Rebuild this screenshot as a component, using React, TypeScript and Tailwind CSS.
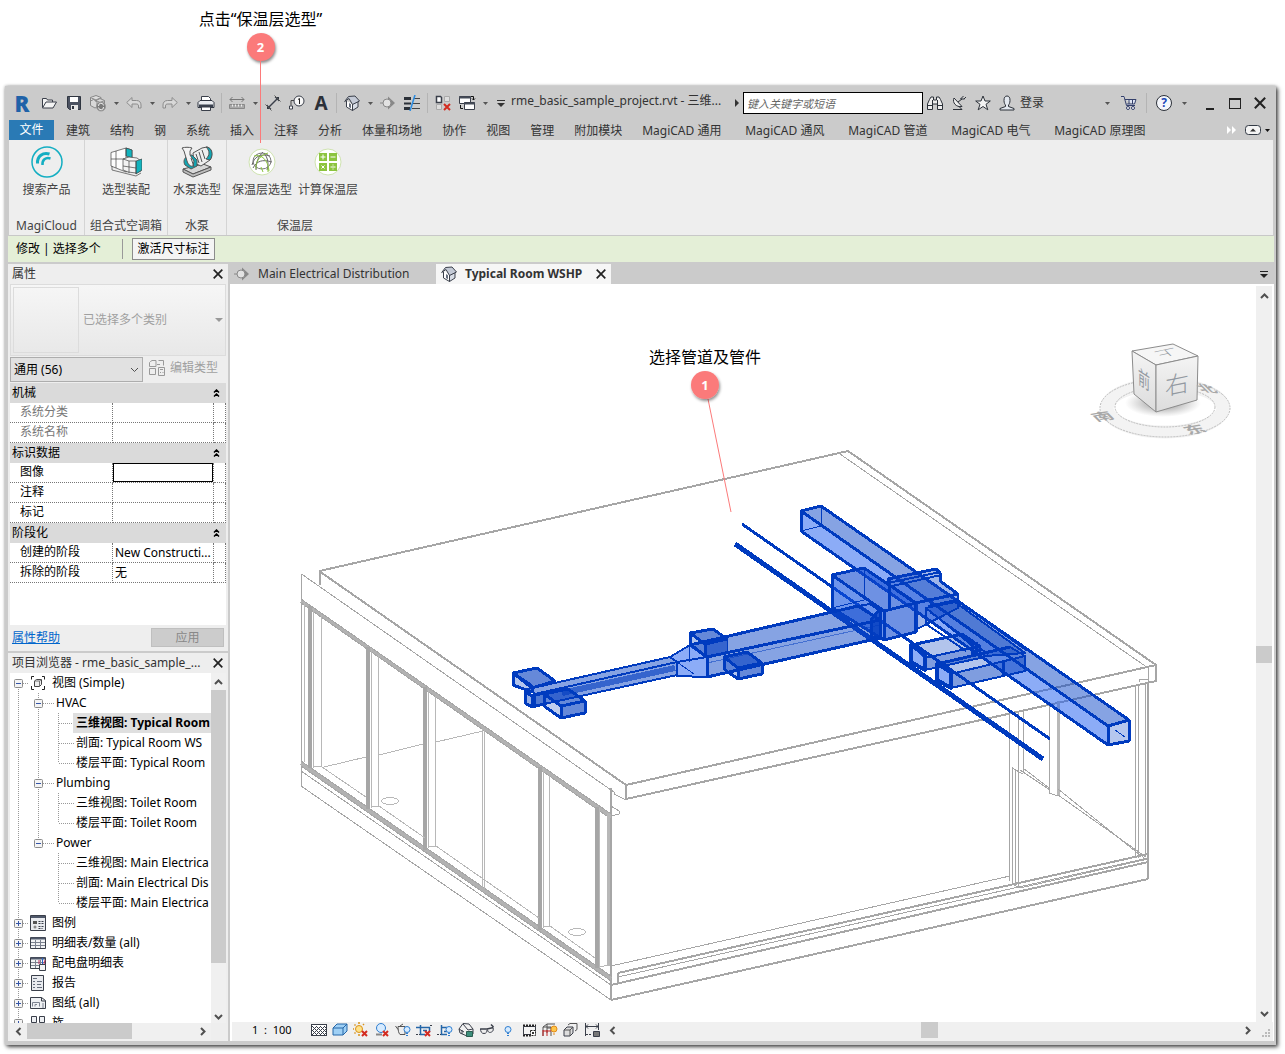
import type { ReactNode } from 'react';

const ribbonTabs = ['建筑', '结构', '钢', '系统', '插入', '注释', '分析', '体量和场地', '协作', '视图', '管理', '附加模块'];
const magicadTabs = ['MagiCAD 通用', 'MagiCAD 通风', 'MagiCAD 管道', 'MagiCAD 电气', 'MagiCAD 原理图'];

const propertyGroups = [
  { title: '机械', muted: true, rows: [['系统分类', ''], ['系统名称', '']] },
  { title: '标识数据', muted: false, rows: [['图像', ''], ['注释', ''], ['标记', '']] },
  { title: '阶段化', muted: false, rows: [['创建的阶段', 'New Constructi...'], ['拆除的阶段', '无']] },
];

type TreeRow = { level: number; label: string; icon?: ReactNode; open?: boolean; last?: boolean; trunk?: boolean; active?: boolean };

function Svg({ w = 16, h = 16, children }: { w?: number; h?: number; children: ReactNode }) {
  return (
    <svg width={w} height={h} viewBox={`0 0 ${w} ${h}`} fill="none" stroke="#3a3f4a" strokeWidth="1" className="shrink-0" aria-hidden="true">
      {children}
    </svg>
  );
}

/* ---------- quick access icons ---------- */

const OpenIcon = () => (
  <Svg>
    <path d="M1.500 12.500v-9h4l1 1.500h5v2" fill="#f4f4f4" />
    <path d="M1.500 13 5 7h10.500L12 13Z" fill="#f4f4f4" />
  </Svg>
);
const SaveIcon = () => (
  <Svg>
    <path d="M1.500 1.500h13v13h-11l-2-2Z" fill="#4b5261" stroke="#2f3540" />
    <path d="M4 2h8v5H4z" fill="#fff" stroke="none" />
    <path d="M5 10h7v5H5z" fill="#e6e6e6" stroke="none" />
    <path d="M6 11h2v3H6z" fill="#2f3540" stroke="none" />
  </Svg>
);
const SyncIcon = () => (
  <Svg w={18} h={18}>
    <g stroke="#888" fill="#ddd">
      <path d="m7 1.500 5 2v5L7 11 1.500 8.500v-5Z" />
      <path d="m7 6.500 4-2 4.500 2v5.500L11 15l-4-2.500Z" fill="#d2d2d2" />
      <path d="m1.500 7 3-1.500L8 7.500V13l-2 1-4.500-2.500Z" fill="#d8d8d8" />
      <path d="M1.500 3.500 7 6l5-2.500M7 6v2M7 6.500l4 2 4.500-2" />
    </g>
    <circle cx="12" cy="12.500" r="4.500" fill="#7a7a7a" stroke="#999" />
    <path d="M9.500 12a2.500 2.500 0 0 1 5-.5M14.500 13a2.500 2.500 0 0 1-5 .5" stroke="#eee" />
  </Svg>
);
const UndoIcon = ({ flip = false }: { flip?: boolean }) => (
  <Svg>
    <path
      transform={flip ? 'translate(16 0) scale(-1 1)' : undefined}
      d="M.7 7.500 6 2.500v3h4.500c3 0 4.500 2 4.500 4.500v3h-2.500v-2c0-1.500-.8-2-2.300-2H6v3.500Z"
      fill="#d8d8d8"
      stroke="#8c8c8c"
    />
  </Svg>
);
const PrintIcon = () => (
  <Svg w={18} h={16}>
    <path d="M4.500 6V1.500h7l2 2V6" fill="#fff" />
    <path d="M3 5.500h12l2 2v5H1v-5Z" fill="#e9ebef" stroke="#2f3540" />
    <path d="M2 9.500h14v3H2z" fill="#39404d" stroke="none" />
    <path d="M4.500 12h9v3.500h-9z" fill="#fff" />
  </Svg>
);
const MeasureIcon = () => (
  <Svg>
    <path d="M1 4.500h14M3.500 2 1 4.500 3.500 7M12.500 2 15 4.500 12.500 7" stroke="#777" />
    <path d="M.5 9.500h15v4H.5z" fill="#a9a9a9" stroke="#888" />
    <path d="M3.500 9.500v2M6.500 9.500v2M9.500 9.500v2M12.500 9.500v2" stroke="#eee" />
  </Svg>
);
const DimensionIcon = () => (
  <Svg>
    <path d="m4 12 8-8" strokeWidth="1.500" />
    <path d="M2 14V9.500L6.500 14ZM14 2H9.500L14 6.500Z" fill="#333a45" stroke="none" />
    <path d="m.5 9.500 6 6M9.500.5l6 6" stroke="#555" />
  </Svg>
);
const TagIcon = () => (
  <Svg w={18} h={16}>
    <path d="M3 10.500V5.500h3.500" stroke="#444" />
    <path d="M1.500 11h3v3h-3z" fill="#fff" />
    <circle cx="11" cy="6" r="5" fill="#f8f8f8" />
    <path d="M10 4.500 11.500 3.500V9" stroke="#222" />
  </Svg>
);
const HouseIcon = () => (
  <Svg>
    <path d="M2.500 6v6l6 3.500V9" fill="#fff" />
    <path d="M8.500 15.500 14 12V6.500L8.500 9Z" fill="#d8dde6" />
    <path d="M.7 6.500 4.500 1.500 11 1l4.500 5-7 3.500L5 3.500Z" fill="#c4cad6" />
    <path d="m5 8 2 1.200v4L5 12Z" fill="#666e7d" stroke="none" />
  </Svg>
);
const SectionIcon = () => (
  <Svg>
    <path d="M8 1.500 15 8l-7 6.500Z" fill="#888" stroke="none" />
    <circle cx="7" cy="8" r="4" fill="#e2e2e2" stroke="#888" />
    <path d="M0 8h3" stroke="#888" />
  </Svg>
);
const ThinLinesIcon = () => (
  <Svg>
    <path d="M0 3.500h7M0 13.500h6" stroke="#2b3038" strokeWidth="3" />
    <path d="M0 8.500h7" stroke="#2b3038" strokeWidth="2" />
    <path d="M10 3.500h6M9 8.500h7M8 13.500h8" stroke="#444" />
    <path d="M11 0 6 16" stroke="#2a8be0" strokeWidth="1.500" />
  </Svg>
);
const CloseHiddenIcon = () => (
  <Svg>
    <path d="M1.500 1.500h4l1 1v5h-5Z" fill="#fff" strokeWidth="1.500" />
    <path d="M9.500 1.500h5v5h-5zM1.500 9.500h5v5h-5z" fill="#ddd" stroke="#aaa" />
    <path d="m9 9 6 6M15 9l-6 6" stroke="#d32b20" strokeWidth="2" />
  </Svg>
);
const SwitchIcon = () => (
  <Svg w={18} h={16}>
    <path d="M1.500 1.500h11v7h-11z" fill="#fff" />
    <path d="M1 2.500h12" stroke="#444b57" strokeWidth="2" />
    <path d="M6.500 7.500h10v7h-10z" fill="#fff" />
    <path d="M6 8.500h11" stroke="#444b57" strokeWidth="2" />
    <path d="M13 1.500h2.500V5M14 3.500l1.500 1.500L17 3.500M2.500 10v3.500H5" stroke="#111" />
  </Svg>
);
const BinocularsIcon = () => (
  <Svg>
    <path d="M2.500 4.500 4 2h2.500v3h3V2H12l1.500 2.500L15.500 9v5.500h-5V9h-5v5.500h-5V9Z" fill="#eee" stroke="#2b3038" />
    <path d="M5.500 5v4M10.500 5v4M.5 10.500h5M10.500 10.500h5" stroke="#2b3038" />
  </Svg>
);
const DishIcon = () => (
  <Svg>
    <path d="M3 3c-2 4.500 2 9.500 8 8.500Z" fill="#eee" stroke="#2b3038" />
    <path d="m7 7 4-3M12.500 1 9.500 4h4M2 14.500h9L7.500 11M13 4l2-2" stroke="#2b3038" />
  </Svg>
);
const StarIcon = () => (
  <Svg>
    <path d="m8 1 2 5h5.300L11 9.300l1.800 5.500L8 11.500l-4.800 3.300L5 9.300.7 6H6Z" fill="#f2f2f2" stroke="#2b3038" />
  </Svg>
);
const UserIcon = () => (
  <Svg>
    <path d="M5 5.500C5 2.500 6 1 8 1s3 1.500 3 4.500C11 8 10 9.500 9.500 10v1.500l5.500 2v1.500H1v-1.500l5.500-2V10C6 9.500 5 8 5 5.500Z" fill="#e3e8ef" stroke="#2b3038" />
  </Svg>
);
const CartIcon = () => (
  <Svg>
    <path d="M0 1.500h3l2.500 9h8.500M4 4.500h11L13.500 9h-8" fill="#dfe5f4" stroke="#34406b" />
    <path d="M8 5v4M11.500 5v4" stroke="#34406b" />
    <circle cx="7" cy="13" r="1.500" fill="#fff" stroke="#34406b" />
    <circle cx="12" cy="13" r="1.500" fill="#fff" stroke="#34406b" />
  </Svg>
);

/* ---------- ribbon icons ---------- */

const CloudIcon = () => (
  <Svg w={32} h={32}>
    <circle cx="16" cy="16" r="15" stroke="#14aec2" strokeWidth="1.500" />
    <path d="M6.500 17.500C6 10 12 6 18.500 8" stroke="#14aec2" strokeWidth="3" />
    <path d="M11.500 19c-.5-5 3-8 8-6.500" stroke="#14aec2" strokeWidth="2.500" />
  </Svg>
);
const AhuIcon = () => (
  <Svg w={32} h={32}>
    <g strokeWidth=".7" stroke="#444">
      <path d="M1 6.500 16 2l6 2v19l-6 3L1 20Z" fill="#fcfcfc" />
      <path d="m16 2 6 2v8l-6-2Z" fill="#12b3bd" />
      <path d="M1 13h15l6 1M6 5v17M16 2v24" />
      <path d="m13 13 6-2 8 1 4 3v10l-5 2-8-1-5-2Z" fill="#f2f2f2" />
      <path d="m26 15 6-2v11l-6 4Z" fill="#12b3bd" />
      <path d="M13 13l6 2v12M19 15h7v13M13 20l13 2" />
      <path d="M2 20v4l24 6 5-3" fill="none" />
    </g>
  </Svg>
);
const PumpIcon = () => (
  <Svg w={32} h={32}>
    <g strokeWidth="1" stroke="#555">
      <path d="m2 23 20-5 8 3-18 7Z" fill="#d7d7d7" />
      <path d="m2 23 10 5 18-7v3l-18 7-10-5Z" fill="#bdbdbd" />
      <path d="m12 7 9-5 5-1c5 1 6 8 3 13l-9 6-7-3Z" fill="#eee" />
      <path d="M25 1c6 0 8 8 4 13l-4-1c4-4 4-8 0-12Z" fill="#12a6b3" />
      <path d="M4 19C1 14 5 9 11 9l5 5v6l-6 3Z" fill="#12a6b3" />
      <path d="M1 2c3-1 7-1 10 0L9 5v4l4 6-1 5c-3 1-5-2-6-5L3 5Z" fill="#f3f3f3" />
      <path d="m15 8 3 9M18 6l3 10M21 4l3 9M10 12l3 9" />
    </g>
  </Svg>
);
const InsulationIcon = () => (
  <Svg w={28} h={28}>
    <circle cx="14" cy="14" r="13" fill="#fff" stroke="#cfe3b0" />
    <path d="M4 17C6 9 12 5 22 8M5 20c4-7 9-9 19-6M8 22C8 13 11 8 15 4M19 22c2-6 1-12-3-17" stroke="#666" />
    <ellipse cx="14" cy="13" rx="9" ry="8" stroke="#777" />
    <path d="M6 8c8-2 14 4 15 15M8 21c-1-8 5-14 12-16M13 19l2 5M20 20v4" stroke="#8cc43f" />
  </Svg>
);
const CalculatorIcon = () => (
  <Svg w={28} h={28}>
    <circle cx="14" cy="14" r="13" fill="#fff" stroke="#cfe3b0" />
    <path d="M5 5h8v8H5zM15 5h8v8h-8zM5 15h8v8H5zM15 15h8v8h-8z" fill="#8cc43f" stroke="none" />
    <path d="M6.500 9h5M9 6.500v5M16.500 9h5M7.500 17.500l3 3M10.500 17.500l-3 3M16.500 19h5M19 16.500v1M19 20.500v1" stroke="#fff" />
  </Svg>
);

/* ---------- browser icons ---------- */

const ViewsIcon = () => (
  <Svg>
    <path d="M4 1.500H1.500v3M12 1.500h2.500v3M1.500 11v3.500H4M14.500 11v3.500H12" stroke="#222" />
    <path d="M4.500 6 6.500 4.500h5v5l-2 2h-5Z" fill="#eee" stroke="#444" />
    <path d="M4.500 6h5v5.500M9.500 6l2-1.500" stroke="#777" />
  </Svg>
);
const LegendIcon = () => (
  <Svg>
    <path d="M.5.5h15v15H.5z" fill="#e9ebef" />
    <path d="M1 2h14" stroke="#4f586a" strokeWidth="2" />
    <path d="M3 6h4v3H3z" fill="#555" stroke="none" />
    <circle cx="5" cy="12" r="1.500" fill="#888" stroke="none" />
    <path d="M8.500 6.500h5M8.500 8.500h5M8.500 11.500h5M8.500 13.500h4" strokeDasharray="2 1" />
  </Svg>
);
const ScheduleIcon = ({ panel = false }: { panel?: boolean }) => (
  <Svg>
    <path d="M.5 2.500h15v11H.5z" fill="#f2f3f5" />
    <path d="M1 3.500h14" stroke="#4f586a" strokeWidth="2" />
    <path d="M1 7.500h14M1 10.500h14M5.500 5v8M10.500 5v8" stroke="#7c8290" />
    {panel && <path d="M9.500 9.500h6v6h-6z" fill="#f4f4f4" />}
    {panel && <path d="M9 5v4M15 5l-1 4" stroke="#c03060" />}
    {panel && <path d="M12.500 3v6" stroke="#2b62c9" />}
  </Svg>
);
const ReportIcon = () => (
  <Svg>
    <path d="M1.500.5h12v15h-12z" fill="#e9ebef" />
    <path d="M3 3.500h4M3 6.500h2M3 9.500h2M3 12.500h2M7 6.500h5M7 9.500h4M7 12.500h5" stroke="#666e7d" />
  </Svg>
);
const SheetIcon = () => (
  <Svg>
    <path d="M.5 2.500h11l4 3v8H.5z" fill="#eef0f3" />
    <path d="M11.500 2.500v3.500h4" />
    <path d="M2.500 11.500v-4h7v4M5 11.500v-2h2M13 8v5" stroke="#7c8290" />
  </Svg>
);
const FamilyIcon = () => (
  <Svg>
    <path d="M1.500 1.500h5v6h-5zM9.500 1.500h5v6h-5zM1.500 10.500h5v5h-5z" fill="#eef0f3" />
  </Svg>
);

const treeRows: TreeRow[] = [
  { level: 0, label: '视图 (Simple)', icon: <ViewsIcon />, open: true },
  { level: 1, label: 'HVAC', open: true },
  { level: 2, label: '三维视图: Typical Room', trunk: true, active: true },
  { level: 2, label: '剖面: Typical Room WS', trunk: true },
  { level: 2, label: '楼层平面: Typical Room', trunk: true, last: true },
  { level: 1, label: 'Plumbing', open: true },
  { level: 2, label: '三维视图: Toilet Room', trunk: true },
  { level: 2, label: '楼层平面: Toilet Room', trunk: true, last: true },
  { level: 1, label: 'Power', open: true, last: true },
  { level: 2, label: '三维视图: Main Electrica' },
  { level: 2, label: '剖面: Main Electrical Dis' },
  { level: 2, label: '楼层平面: Main Electrica', last: true },
  { level: 0, label: '图例', icon: <LegendIcon /> },
  { level: 0, label: '明细表/数量 (all)', icon: <ScheduleIcon /> },
  { level: 0, label: '配电盘明细表', icon: <ScheduleIcon panel /> },
  { level: 0, label: '报告', icon: <ReportIcon /> },
  { level: 0, label: '图纸 (all)', icon: <SheetIcon /> },
  { level: 0, label: '族', icon: <FamilyIcon /> },
];

/* ---------- small shared pieces ---------- */

function Caret({ color = '#555' }: { color?: string }) {
  return (
    <svg width="5" height="3" viewBox="0 0 5 3" aria-hidden="true">
      <path d="M0 0h5L2.500 3Z" fill={color} />
    </svg>
  );
}

function Chevron({ dir, thin = false }: { dir: 'up' | 'down' | 'left' | 'right'; thin?: boolean }) {
  const d = { up: 'M1 7 4.500 3.500 8 7', down: 'M1 3l3.500 3.500L8 3', left: 'M6.500 1 3 4.500 6.500 8', right: 'M3 1l3.500 3.500L3 8' }[dir];
  return (
    <svg width="9" height="9" viewBox="0 0 9 9" fill="none" stroke="#505050" strokeWidth={thin ? 1 : 2} aria-hidden="true">
      <path d={d} />
    </svg>
  );
}

function CrossIcon({ size = 10 }: { size?: number }) {
  return (
    <svg width={size} height={size} viewBox="0 0 10 10" stroke="#222" strokeWidth="1.700" aria-hidden="true">
      <path d="m.7.7 8.600 8.600M9.300.7.7 9.300" />
    </svg>
  );
}

function Tool({ label, children }: { label: string; children: ReactNode }) {
  return (
    <button type="button" aria-label={label} className="flex h-6 w-6 shrink-0 items-center justify-center">
      {children}
    </button>
  );
}

function DropButton({ label }: { label: string }) {
  return (
    <button type="button" aria-label={label} className="flex h-6 w-3 shrink-0 items-center justify-center">
      <Caret />
    </button>
  );
}

const Divider = () => <span className="mx-[3px] h-5 w-px shrink-0 bg-[#b4b4b4]" />;

function TitleBar() {
  return (
    <header className="flex h-[34px] items-center pr-0.5">
      <button type="button" aria-label="Revit" className="w-7 shrink-0 text-center text-[22px] leading-6 font-black text-[#1f62a8]">R</button>
      <button type="button" aria-label="打开" className="flex h-6 w-[26px] shrink-0 items-center justify-center"><OpenIcon /></button>
      <Tool label="保存"><SaveIcon /></Tool>
      <Tool label="同步"><SyncIcon /></Tool>
      <DropButton label="同步选项" />
      <Tool label="放弃"><UndoIcon /></Tool>
      <DropButton label="放弃列表" />
      <Tool label="重做"><UndoIcon flip /></Tool>
      <DropButton label="重做列表" />
      <Tool label="打印"><PrintIcon /></Tool>
      <Divider />
      <Tool label="测量"><MeasureIcon /></Tool>
      <DropButton label="测量选项" />
      <Tool label="对齐尺寸标注"><DimensionIcon /></Tool>
      <Tool label="按类别标记"><TagIcon /></Tool>
      <Tool label="文字"><span className="text-[19px] leading-6 font-bold text-[#2b3038]">A</span></Tool>
      <Divider />
      <Tool label="默认三维视图"><HouseIcon /></Tool>
      <DropButton label="三维视图选项" />
      <Tool label="剖面"><SectionIcon /></Tool>
      <Tool label="细线"><ThinLinesIcon /></Tool>
      <Divider />
      <Tool label="关闭隐藏窗口"><CloseHiddenIcon /></Tool>
      <Tool label="切换窗口"><SwitchIcon /></Tool>
      <DropButton label="窗口列表" />
      <button type="button" aria-label="自定义快速访问工具栏" className="flex h-6 w-5 shrink-0 flex-col items-center justify-center gap-[2px]">
        <span className="h-px w-2 bg-[#333]" />
        <svg width="8" height="4" viewBox="0 0 8 4" aria-hidden="true"><path d="M0 0h8L4 4Z" fill="#333" /></svg>
      </button>
      <h1 className="w-56 shrink-0 pb-1 text-[12px] leading-4 whitespace-nowrap text-[#333]">rme_basic_sample_project.rvt - 三维...</h1>
      <svg width="4" height="8" viewBox="0 0 4 8" className="mr-1 shrink-0" aria-hidden="true"><path d="M0 0v8l4-4Z" fill="#333" /></svg>
      <input
        type="text"
        aria-label="搜索"
        placeholder="键入关键字或短语"
        className="h-[22px] w-[180px] min-w-0 border border-black bg-white px-[3px] text-[11px] italic placeholder:text-[#666]"
      />
      <Tool label="查找"><BinocularsIcon /></Tool>
      <Tool label="通讯中心"><DishIcon /></Tool>
      <Tool label="收藏夹"><StarIcon /></Tool>
      <button type="button" className="flex shrink-0 items-center gap-[5px] pl-1 text-[12px] leading-4 text-[#333]">
        <UserIcon />
        登录
      </button>
      <span className="flex-1" />
      <DropButton label="登录选项" />
      <span className="w-1" />
      <Tool label="应用商店"><CartIcon /></Tool>
      <span className="w-0.5" />
      <Divider />
      <button type="button" aria-label="帮助" className="flex h-6 w-7 shrink-0 items-center justify-center">
        <span className="flex h-4 w-4 items-center justify-center rounded-full border border-[#2b3038] bg-[#f4f6fb] text-[12px] leading-4 font-bold text-[#1c48b8]">?</span>
      </button>
      <DropButton label="帮助选项" />
      <button type="button" aria-label="最小化" className="ml-2 flex h-6 w-6 items-center justify-center">
        <span className="mt-3 h-[2px] w-2 bg-[#222]" />
      </button>
      <button type="button" aria-label="最大化" className="flex h-6 w-[26px] items-center justify-center">
        <span className="h-[11px] w-3 border border-t-2 border-[#222]" />
      </button>
      <Tool label="关闭"><CrossIcon size={12} /></Tool>
    </header>
  );
}

function RibbonTabs() {
  return (
    <nav className="flex h-5 items-center overflow-hidden pl-px text-[12px] leading-[22px] whitespace-nowrap text-[#333]">
      <button type="button" className="mr-0.5 w-[45px] shrink-0 bg-[#2a7ab5] text-white">文件</button>
      {ribbonTabs.map((tab) => (
        <button key={tab} type="button" className="shrink-0 px-[10px] pt-px">{tab}</button>
      ))}
      {magicadTabs.map((tab) => (
        <button key={tab} type="button" className="min-w-[103px] shrink-0 pt-px pl-[10px] text-left">{tab}</button>
      ))}
      <span className="flex-1" />
      <button type="button" aria-label="更多选项卡" className="mr-2">
        <svg width="10" height="8" viewBox="0 0 10 8" aria-hidden="true"><path d="M0 0v8l4-4ZM5 0v8l4-4Z" fill="#fff" /></svg>
      </button>
      <button type="button" aria-label="最小化功能区" className="flex items-center gap-1 pr-1">
        <svg width="16" height="10" viewBox="0 0 16 10" aria-hidden="true">
          <rect x=".5" y=".5" width="15" height="9" rx="3" fill="#f4f4f4" stroke="#333a45" />
          <path d="M5 6.500h6L8 3.500Z" fill="#333" />
        </svg>
        <Caret color="#111" />
      </button>
    </nav>
  );
}

function RibbonPanel({ title, className, children }: { title: string; className: string; children: ReactNode }) {
  return (
    <section className={`flex shrink-0 flex-col justify-between pt-1.5 pb-px ${className}`}>
      <div className="flex justify-center">{children}</div>
      <h2 className="text-center">{title}</h2>
    </section>
  );
}

function RibbonButton({ label, icon }: { label: string; icon: ReactNode }) {
  return (
    <button type="button" className="flex w-[66px] flex-col items-center gap-1 whitespace-nowrap">
      <span className="flex h-8 items-center">{icon}</span>
      {label}
    </button>
  );
}

function Ribbon() {
  return (
    <div className="mr-px ml-px flex h-24 border-b border-[#c8c8c8] bg-[#eee] text-[12px] leading-4 text-[#444]">
      <RibbonPanel title="MagiCloud" className="w-[76px] border-r border-[#d4d4d4]">
        <RibbonButton label="搜索产品" icon={<CloudIcon />} />
      </RibbonPanel>
      <RibbonPanel title="组合式空调箱" className="w-[83px] border-r border-[#d4d4d4]">
        <RibbonButton label="选型装配" icon={<AhuIcon />} />
      </RibbonPanel>
      <RibbonPanel title="水泵" className="w-[59px] border-r border-[#d4d4d4]">
        <RibbonButton label="水泵选型" icon={<PumpIcon />} />
      </RibbonPanel>
      <RibbonPanel title="保温层" className="w-[136px]">
        <RibbonButton label="保温层选型" icon={<InsulationIcon />} />
        <RibbonButton label="计算保温层" icon={<CalculatorIcon />} />
      </RibbonPanel>
    </div>
  );
}

function Properties() {
  return (
    <section className="shrink-0 bg-[#eee] px-0.5 pb-1">
      <div className="flex h-5 items-center justify-between pr-[3px] pl-0.5">
        <h2 className="text-[#333]">属性</h2>
        <button type="button" aria-label="关闭属性"><CrossIcon /></button>
      </div>
      <button type="button" className="flex h-[72px] w-full items-center border border-[#dcdcdc] bg-linear-to-b from-[#f6f6f6] to-[#e8e8e8] p-0.5 text-[#a0a0a0]">
        <span className="mr-1 h-[66px] w-[66px] border border-[#dcdcdc]" />
        <span className="flex-1 text-left">已选择多个类别</span>
        <svg width="8" height="4" viewBox="0 0 8 4" aria-hidden="true"><path d="M0 0h8L4 4Z" fill="#999" /></svg>
      </button>
      <div className="flex items-center py-px">
        <div className="relative">
          <select aria-label="类别" className="h-[25px] w-[133px] appearance-none border border-[#adadad] bg-[#e1e1e1] px-[3px] text-black">
            <option>通用 (56)</option>
          </select>
          <span className="pointer-events-none absolute top-2 right-1"><Chevron dir="down" thin /></span>
        </div>
        <button type="button" className="ml-1.5 flex items-center gap-[5px] pb-1 text-[#a0a0a0]">
          <Svg>
            <g stroke="#999">
              <path d="M1.500 1.500 3 .5h4v6H.5v-4ZM9.500.5h5v5M.5 8.500h6v6h-6zM8 4.500h3" />
              <path d="M9.500 7.500h6v8h-6zM11 9.500h3M11 12.500h1M13.500 12.500h1" />
            </g>
          </Svg>
          编辑类型
        </button>
      </div>
      <div className="h-[242px] bg-white">
        <table className="w-full table-fixed border-separate border-spacing-0 text-black">
          <colgroup>
            <col className="w-[103px]" />
            <col />
            <col className="w-3" />
          </colgroup>
          {propertyGroups.map((group) => (
            <tbody key={group.title}>
              <tr className="h-5 bg-[#dadada]">
                <th colSpan={3} scope="colgroup" className="h-5 py-0 pl-0.5 text-left font-normal">
                  <div className="flex items-center justify-between pr-1.5">
                    {group.title}
                    <svg width="7" height="8" viewBox="0 0 7 8" fill="none" stroke="#000" strokeWidth="1.500" aria-hidden="true">
                      <path d="m1 3.500 2.500-2.500L6 3.500M1 7.500 3.500 5 6 7.500" />
                    </svg>
                  </div>
                </th>
              </tr>
              {group.rows.map(([name, value]) => (
                <tr key={name} className="h-5">
                  <th scope="row" className={`h-5 border-r border-b border-dotted border-[#777] pt-0 pb-px pl-2.5 text-left font-normal ${group.muted ? 'text-[#777]' : ''}`}>{name}</th>
                  <td className="h-5 overflow-hidden border-r border-b border-dotted border-[#777] p-0 whitespace-nowrap">
                    {name === '图像' ? (
                      <input aria-label={name} className="block h-[19px] w-full border border-black bg-white px-0.5" />
                    ) : (
                      <span className="pl-0.5">{value}</span>
                    )}
                  </td>
                  <td className="h-5 border-r border-b border-dotted border-[#777] p-0" />
                </tr>
              ))}
            </tbody>
          ))}
        </table>
      </div>
      <div className="flex items-center justify-between pt-[3px] pr-0.5 pl-0.5">
        <a href="#help" className="text-[#0066cc] underline">属性帮助</a>
        <button type="button" disabled className="h-[19px] w-[73px] border border-[#bfbfbf] bg-[#ccc] leading-4 text-[#888]">应用</button>
      </div>
    </section>
  );
}

const dotted = { stroke: '#999', strokeDasharray: '1 1', shapeRendering: 'crispEdges' as const };

function Guide({ kind, reach = 12 }: { kind: 'line' | 'blank' | 'tee' | 'elbow' | 'plus' | 'minus' | 'first' | 'lastMinus'; reach?: number }) {
  const box = kind === 'plus' || kind === 'minus' || kind === 'first' || kind === 'lastMinus';
  return (
    <svg width="20" height="20" viewBox="0 0 20 20" className="shrink-0 overflow-visible" fill="none" aria-hidden="true">
      {kind !== 'blank' && <path d={kind === 'elbow' || kind === 'lastMinus' ? 'M8.500 0v10' : kind === 'first' ? 'M8.500 10v10' : 'M8.500 0v20'} {...dotted} />}
      {kind !== 'blank' && kind !== 'line' && <path d={`M9 10.500h${reach}`} {...dotted} />}
      {box && <rect x="4.500" y="6.500" width="8" height="8" rx="1" fill="#f4f4f4" stroke="#8c8c8c" />}
      {box && <path d={kind === 'plus' ? 'M6 10.500h5M8.500 8v5' : 'M6 10.500h5'} stroke="#3556a8" />}
    </svg>
  );
}

function ProjectBrowser() {
  return (
    <section className="flex min-h-0 flex-1 flex-col bg-[#eee] px-0.5">
      <div className="flex h-5 items-center justify-between pr-[3px] pl-0.5">
        <h2 className="whitespace-nowrap text-[#333]">项目浏览器 - rme_basic_sample_...</h2>
        <button type="button" aria-label="关闭项目浏览器"><CrossIcon /></button>
      </div>
      <div className="flex min-h-0 flex-1">
        <ul className="min-w-0 flex-1 overflow-hidden bg-white whitespace-nowrap text-black">
          {treeRows.map((row, i) => (
            <li key={i} className="flex h-5 items-center leading-5">
              {row.level === 0 && <Guide kind={row.open ? 'first' : 'plus'} reach={10} />}
              {row.level > 0 && <Guide kind="line" />}
              {row.level === 1 && <Guide kind={row.last ? 'lastMinus' : 'minus'} reach={15} />}
              {row.level === 2 && <Guide kind={row.trunk ? 'line' : 'blank'} />}
              {row.level === 2 && <Guide kind={row.last ? 'elbow' : 'tee'} reach={15} />}
              {row.icon}
              <span className={row.active ? 'ml-[3px] h-5 flex-1 bg-[#dfdfdf] pl-[3px] font-bold' : 'ml-1.5'}>{row.label}</span>
            </li>
          ))}
        </ul>
        <div className="flex w-[15px] shrink-0 flex-col items-center bg-[#f0f0f0]">
          <span className="flex h-[17px] items-center"><Chevron dir="up" /></span>
          <span className="w-full flex-[47] bg-[#cbcbcb]" />
          <span className="flex-[8]" />
          <span className="flex h-[13px] items-center"><Chevron dir="down" /></span>
        </div>
      </div>
      <div className="mr-[15px] flex h-[18px] shrink-0 items-center bg-[#f0f0f0] pb-0.5">
        <span className="flex w-[17px] justify-center"><Chevron dir="left" /></span>
        <span className="h-full w-[105px] bg-[#cbcbcb]" />
        <span className="flex-1" />
        <span className="flex w-[17px] justify-center"><Chevron dir="right" /></span>
      </div>
    </section>
  );
}

function Building() {
  return (
    <g stroke="#a6a6a6" fill="none" shapeRendering="crispEdges">
      {/* roof slab */}
      <path d="M319.500 585V571L848 451l308 214v16L626 799v-14L1156 665M319 571l307 214" strokeWidth="2" />
      <path d="m840 454 308 214v14M1139 682v-3h9" />
      {/* parapet and sill of the glazed front */}
      <path d="m301.500 574 309.500 216 3 2v2l12 6M301.500 574v212" />
      <path d="M611 1000V788" strokeWidth="2" />
      <path d="m301 601 310 216M301 763l310 216" strokeWidth="4" stroke="#b2b2b2" />
      <path d="m301 599 310 215M301 603l310 216M301 761l310 215M301 766l310 215M301 771l310 214M301 786l310 214" />
      <path d="m611 806 8 5v3l-8 2" />
      {/* mullions */}
      <path d="M310 606v162M368 647v162M425 687v163M540 767v163M597 807v161" strokeWidth="4" />
      <path d="M608.500 813v153" strokeWidth="3" stroke="#b8b8b8" />
      <path d="M313.500 608v160M371.500 648v160M428.500 690v158M543.500 768v160M599.500 808v160M321.500 615v151M378.500 655v151M435.500 696v150M549.500 776v150M482.500 729v158M484.500 730v159M304.500 602v160" stroke="#b8b8b8" />
      {/* floor inside */}
      <path d="m324 767 42-10M379 755l44-11M436 742l47-11M322 767l44 30M379 806l46 32M436 846l103 72M550 926l45 32M314 767l8-1M371 807l8-1M428 847l8-1M543 927l7-1M600 967l8-2" stroke="#b8b8b8" />
      <ellipse cx="390" cy="801" rx="8.500" ry="3.500" stroke="#b8b8b8" />
      <ellipse cx="577" cy="932" rx="8.500" ry="3.500" stroke="#b8b8b8" />
      {/* long side */}
      <path d="m618 973 530-119M618 973v9M611 985l537-123M611 1000l537-121M1148 682v197" strokeWidth="2" />
      <path d="m611 966 399-90M618 977l530-119" />
      {/* door and right bay */}
      <path d="M1135.500 685v173M1138.500 684v174M1145.500 682v172" />
      <path d="M1009.500 713v168M1018.500 711v60M1023.500 710v62M1049.500 705v88" />
      <path d="M1058.500 701v95" strokeWidth="3" stroke="#b8b8b8" />
      <path d="M1012.500 884V768l10 6M1015.500 769v115M1018.500 772v116M1023 768l26 20M1020 770l30 20M1058 789l82 66M1058 795l88 62M1049 793l9 3M1012 884l8 4 128-29M1138 853l10 8" />
    </g>
  );
}

function Ducts() {
  return (
    <g stroke="#003bbf" strokeWidth="3" strokeLinejoin="round" fill="#1a5af0" fillOpacity=".5" shapeRendering="crispEdges">
      {/* pipes behind the ducts */}
      <path d="m742 524 308 215" strokeWidth="3" />
      <path d="m735 544 308 215" strokeWidth="5" />

      {/* main duct */}
      <path d="m801 511 20-5 308 214-21 6Z" fill="#0d47c8" />
      <path d="m801 511 307 215v19L801 531Z" />
      <path d="m1108 726 21-6v21l-21 4Z" fill="#0d47c8" fillOpacity=".3" />
      <path d="M821 506v20l-20 5M1115 730l10 7" fill="none" strokeWidth="1" />

      {/* heat pump units */}
      <path d="m832 575 32-7 52 35-32 8Z" fill="#0d47d0" fillOpacity=".6" />
      <path d="m832 575 52 36v29l-52-32Z" fill="#0d4fe0" fillOpacity=".6" />
      <path d="m884 611 32-8v29l-32 8Z" fill="#0d47d0" fillOpacity=".6" />
      <path d="m864 568 52 35M889 578v33" fill="none" />
      <path d="M864 568v32l-32 8" fill="none" strokeWidth="1" />
      <path d="m888 579 48-10 4 4v8l18 13-43 9-27-19Z" fill="#0d47c8" fillOpacity=".4" />
      <path d="m915 603 43-9v14l-43 22Z" fill="#0d47c8" fillOpacity=".4" strokeWidth="2" />
      <path d="m888 583 52-11M888 587l53-12M915 603l43-9M915 603v29" fill="none" strokeWidth="2" />
      <path d="m926 608 29-6 70 51-40 3Z" fill="#003bbf" fillOpacity=".4" strokeWidth="2" />
      <path d="M926 608v16l40 27M930 612l58 42M928 606l28-6 70 50" fill="none" strokeWidth="2" />

      {/* branches to the right */}
      <g strokeWidth="2">
        <path d="m911 645 52-11 17 12-55 12Z" fill="#003bbf" fillOpacity=".3" />
        <path d="m925 658 55-12v12l-55 12Z" fill="#003bbf" fillOpacity=".5" />
        <path d="m937 664 73-17 15 9-74 18Z" fill="#003bbf" fillOpacity=".3" />
        <path d="m951 674 74-18v15l-74 17Z" fill="#003bbf" fillOpacity=".5" />
        <path d="m911 645 14 10v15l-14-8ZM937 664l14 8v16l-14-8Z" strokeWidth="4" />
        <path d="M972 640v14M976 642v14M1003 661v15M911 645l52-11M937 664l73-17" fill="none" strokeWidth="3" />
      </g>

      {/* supply duct to the left */}
      <path d="m690 645 168-39 22 14-173 37Z" fill="#0d47c8" />
      <path d="m707 657 173-37v18l-173 39Z" fill="#0d47c8" />
      <path d="m707 663 173-38" strokeWidth="1" fill="none" opacity=".5" />
      <path d="m871 620 9-11v28l-9 1Z" fill="#003bbf" fillOpacity=".7" />
      <path d="m858 606 12-2 10 7" fill="none" strokeWidth="2" />

      {/* transition */}
      <g strokeWidth="2">
        <path d="m670 657 20-12 17 12-30 5Z" />
        <path d="m677 662 30-5v20l-30-1Z" />
        <path d="m690 645-1 17M677 662l17 12" fill="none" strokeWidth="1" />
      </g>

      {/* slim run */}
      <g strokeWidth="2">
        <path d="m528 689 142-32 7 5-142 32Z" fill="#0d47c8" />
        <path d="m535 694 142-32v13l-142 31Z" fill="#0d47c8" />
        <path d="m562 693 113-25" strokeWidth="6" opacity=".6" />
      </g>

      {/* diffuser boxes */}
      <g fill="#003bbf" fillOpacity=".6">
        <path d="m513 673 24-5 18 13-23 7Z" />
        <path d="m513 673 19 13v6l-19-7Z" fillOpacity=".3" />
        <path d="m525 692 7 4v11l-7-4Z" fillOpacity=".4" />
        <path d="m532 696 12-3v11l-12 3Z" fillOpacity=".4" />
        <path d="m544 694 24-5 17 12-24 5Z" />
        <path d="m544 694 17 12v12l-17-12Z" fillOpacity=".25" />
        <path d="m561 706 24-5v12l-24 5Z" />
        <path d="m690 633 23-4 14 10-22 5Z" />
        <path d="m690 633 15 11v12l-15-12Z" fillOpacity=".3" />
        <path d="m705 644 22-5v13l-22 5Z" strokeWidth="1" />
        <path d="m724 657 23-5 15 11-24 5Z" />
        <path d="m724 657 14 11v11l-13-9Z" fillOpacity=".3" />
        <path d="m738 668 24-5v11l-24 5Z" />
      </g>
    </g>
  );
}

function ViewCube() {
  return (
    <g>
      <ellipse cx="1165" cy="408" rx="58" ry="24" fill="none" stroke="#f3f3f3" strokeWidth="13" />
      <g fill="none" stroke="#bbb" strokeDasharray="2 1">
        <ellipse cx="1165" cy="408" rx="65" ry="29" />
        <ellipse cx="1165" cy="407" rx="50" ry="20" />
      </g>
      <ellipse cx="1163" cy="403" rx="38" ry="14" fill="url(#cubeShadow)" />
      <g stroke="#8c8c8c" strokeLinejoin="round">
        <path d="m1132 351 41-7 25 12-42 9Z" fill="#f6f6f6" />
        <path d="m1132 351 24 14v47l-22-18Z" fill="url(#cubeFace)" />
        <path d="m1156 365 42-9-1 44-41 12Z" fill="url(#cubeFace)" />
      </g>
      <g fill="#9299a1" className="font-['Noto_Sans_CJK_SC',sans-serif]" textAnchor="middle">
        <text fontSize="24" fontWeight="300" transform="matrix(1 -.2 0 1 1177 393)">右</text>
        <text fontSize="20" transform="matrix(.6 .4 0 1 1144 387)">前</text>
        <text fontSize="15" fontWeight="300" transform="matrix(-1.400 .3 -.5 -.5 1164 350)">上</text>
        <g fontSize="16" fontWeight="700" fill="#a8a8a8">
          <text transform="matrix(1.200 -.2 .6 .6 1106 420)">南</text>
          <text transform="matrix(1.200 -.2 .6 .6 1198 433)">东</text>
          <text transform="matrix(1.100 .1 .6 .6 1210 392)">北</text>
        </g>
      </g>
    </g>
  );
}

function ModelView() {
  return (
    <svg viewBox="230 284 1026 738" className="block h-full min-w-0 flex-1" role="img" aria-label="Typical Room WSHP">
      <defs>
        <linearGradient id="cubeFace" x1="0" y1="0" x2="0" y2="1">
          <stop offset="0" stopColor="#f4f4f4" />
          <stop offset="1" stopColor="#dcdcdc" />
        </linearGradient>
        <radialGradient id="cubeShadow">
          <stop offset=".3" stopColor="#777" stopOpacity=".6" />
          <stop offset="1" stopColor="#999" stopOpacity="0" />
        </radialGradient>
        <filter id="pinShadow" x="-30%" y="-30%" width="170%" height="170%">
          <feDropShadow dx="1" dy="2" stdDeviation="1.500" floodOpacity=".45" />
        </filter>
      </defs>
      <Building />
      <Ducts />
      <ViewCube />
      <path d="m708 399 23 113" stroke="#fb7a7a" />
      <circle cx="705" cy="385" r="14" fill="#fb7a7a" filter="url(#pinShadow)" />
      <text x="705" y="390" textAnchor="middle" fontSize="13" fontWeight="700" fill="#fff">1</text>
      <text x="705" y="363" textAnchor="middle" fontSize="16" fill="#000">选择管道及管件</text>
    </svg>
  );
}

/* ---------- view control bar ---------- */

const redX = <path d="m9 9 5 5M14 9l-5 5" stroke="#d32b20" strokeWidth="2" />;
const bulb = (
  <>
    <circle cx="12" cy="7.500" r="3" fill="#d6ebff" stroke="#2f7ed0" />
    <path d="M11 11.500h2M11 13.500h2" stroke="#2f7ed0" />
  </>
);

const viewControls: { label: string; icon: ReactNode }[] = [
  {
    label: '详细程度',
    icon: (
      <g shapeRendering="crispEdges">
        <path d="M.5 2.500h15v11H.5z" fill="#fff" />
        <path d="M1 4.500h14M1 8.500h14M1 12.500h14" strokeDasharray="1 3" />
        <path d="M2 5.500h13M2 7.500h13M2 9.500h13M2 11.500h13" strokeDasharray="1 1" />
        <path d="M3 6.500h12M3 10.500h12" strokeDasharray="1 3" />
      </g>
    ),
  },
  { label: '视觉样式', icon: <><path d="m1 6 4-4h10v7l-4 4H1Z" fill="#9fd0f5" stroke="#2466a8" /><path d="M1 6h10v7M11 6l4-4" stroke="#2466a8" /></> },
  { label: '日光路径', icon: <><circle cx="6" cy="7" r="3.500" fill="#ffe28a" stroke="#d8921a" /><path d="M6 0v2M6 12v2M0 7h1M1.500 2.500l1 1M10 3l1-1M1.500 11.500l1-1" stroke="#d8921a" strokeWidth="1.500" />{redX}</> },
  { label: '阴影', icon: <><circle cx="7" cy="6" r="4.500" fill="#d6ebff" stroke="#2f7ed0" /><path d="M2 12.500h6" stroke="#888" strokeWidth="2" />{redX}</> },
  { label: '渲染', icon: <><path d="M3 4.500h7v8H5C3.500 11 3 8 3 4.500ZM3 7.500.5 4M5 4l3-2" fill="#eee" stroke="#555" />{bulb}</> },
  { label: '裁剪视图', icon: <><path d="M4.500 3v9.500H9M0 5.500h14M7 8.500h4M13.500 5v5" stroke="#2466a8" strokeWidth="1.500" /><path d="M0 12.500h4M14 3.500h2" strokeDasharray="2 1" />{redX}</> },
  { label: '显示裁剪区域', icon: <><path d="M4.500 3v9.500H10M4.500 5.500H10M7 9.500h3" stroke="#2466a8" strokeWidth="1.500" /><path d="M0 12.500h4" strokeDasharray="2 1" />{bulb}</> },
  { label: '锁定三维视图', icon: <><path d="M1 7 5 1.500l6 .5 4 5v5l-6 2-7-3Z" fill="#f1f1f1" /><path d="m1 7 5 3M5 2l5 6 5-1M4 8v4" /><path d="M8.500 9.500h6v5h-6z" fill="#3d8f7c" stroke="#2b5c50" /></> },
  { label: '临时隐藏/隔离', icon: <><path d="M1.500 6.500c0 3 1 5 3.500 5s3-2 3-3.500M8.500 7.500c.5 3 2 3.500 4 2.500s2-2.500 1.500-4" fill="#eee" /><path d="M1.500 7H8l6.500-1.500M14.500 5 12 2.500" strokeWidth="1.500" /></> },
  { label: '显示隐藏的图元', icon: <g transform="translate(-4 0)">{bulb}</g> },
  { label: '临时视图属性', icon: <><path d="M2.500 4.500h12v8h-12z" fill="#f4f4f4" /><path d="M2 3.500h13M2 13.500h8" strokeDasharray="2 1" strokeWidth="2" stroke="#222" /><path d="M9.500 8.500h5v5h-5z" fill="#fff" strokeDasharray="2 1" stroke="#222" /><path d="M11 10h2v2h-2z" fill="#333" stroke="none" /></> },
  { label: '显示分析模型', icon: <><path d="M1 14V5l4-3h8M1 5h8v9M5 2v9M5 6h6" stroke="#555" /><path d="M1 14V8M5 14V8M1 9h8" stroke="#c02020" /><circle cx="12" cy="7" r="3" fill="#ffc64a" stroke="#e08a1a" /><path d="M11 12h2" stroke="#e08a1a" /></> },
  { label: '高亮显示位移集', icon: <><path d="m1 8 3-3h6v6l-3 3H1Z" fill="#ddd" /><path d="M1 8h6v6M7 8l3-3M5 3l2-1.500h7v6L12 9" stroke="#555" /></> },
  { label: '显示约束', icon: <><path d="M1.500 1v13M14.500 1v7M2 4.500h12M4 2.500l-2 2 2 2M12 2.500l2 2-2 2" /><path d="M2 12.500h6" strokeDasharray="2 1" /><path d="M9.500 9.500h6v5h-6z" fill="#777" /></> },
];

function Workspace() {
  return (
    <main className="flex min-w-0 flex-1 flex-col bg-white">
      <div className="flex h-[22px] shrink-0 items-end bg-[#cbcbcb] pt-0.5 text-[#333]">
        <button type="button" className="flex h-5 w-[206px] items-center gap-2 pl-1 whitespace-nowrap">
          <SectionIcon />
          Main Electrical Distribution
        </button>
        <div className="flex h-5 w-[175px] items-center gap-2 bg-[#f6f6f6] pl-[5px]">
          <HouseIcon />
          <span className="flex-1 font-bold whitespace-nowrap">Typical Room WSHP</span>
          <button type="button" aria-label="关闭视图" className="pr-[5px]"><CrossIcon /></button>
        </div>
        <span className="flex-1" />
        <button type="button" aria-label="视图列表" className="flex h-5 w-5 flex-col items-center justify-center gap-[2px]">
          <span className="h-px w-2 bg-[#222]" />
          <svg width="8" height="4" viewBox="0 0 8 4" aria-hidden="true"><path d="M0 0h8L4 4Z" fill="#222" /></svg>
        </button>
      </div>
      <div className="flex min-h-0 flex-1 pr-0.5">
        <ModelView />
        <div className="mt-0.5 flex w-4 flex-col items-center bg-[#f0f0f0]">
          <span className="flex h-[18px] items-center"><Chevron dir="up" /></span>
          <span className="flex-1" />
          <span className="h-[17px] w-full bg-[#cbcbcb]" />
          <span className="flex-1" />
          <span className="flex h-[18px] items-center"><Chevron dir="down" /></span>
        </div>
      </div>
      <div className="mr-px ml-0.5 flex h-[19px] shrink-0 items-start bg-[#f0f0f0]">
        <button type="button" className="w-[76px] pl-[20px] text-left text-[11px] leading-4 whitespace-pre text-black">1  :  100</button>
        {viewControls.map((item) => (
          <button key={item.label} type="button" aria-label={item.label} className="flex h-4 w-[21px] shrink-0 items-center justify-center">
            <Svg>{item.icon}</Svg>
          </button>
        ))}
        <span className="flex h-4 w-5 items-center justify-center"><Chevron dir="left" /></span>
        <span className="flex-1" />
        <span className="h-4 w-[17px] bg-[#cbcbcb]" />
        <span className="flex-1" />
        <span className="flex h-4 w-5 items-center justify-center"><Chevron dir="right" /></span>
        <svg width="16" height="16" viewBox="0 0 16 16" aria-hidden="true">
          <path d="M5 13h2v2H5zM8 13h2v2H8zM11 13h2v2h-2zM8 10h2v2H8zM11 10h2v2h-2zM11 7h2v2h-2z" fill="#bbb" />
        </svg>
      </div>
    </main>
  );
}

export default function App() {
  return (
    <div className="relative flex h-screen flex-col bg-white pt-[86px] pr-[9px] pb-[9px] pl-[5px] font-['Noto_Sans','Noto_Sans_CJK_SC',sans-serif] text-[12px] leading-4">
      <div className="flex min-h-0 flex-1 flex-col bg-[#cbcbcb] pr-0.5 pb-1 pl-[3px] shadow-[2px_2px_4px_rgba(0,0,0,0.7),0_0_3px_rgba(0,0,0,0.3)]">
        <TitleBar />
        <RibbonTabs />
        <Ribbon />
        <div className="flex h-[26px] shrink-0 items-center bg-[#e4efd7] pl-2 text-black">
          <span className="w-[106px] whitespace-nowrap">修改 | 选择多个</span>
          <span className="mr-[9px] h-5 w-px bg-[#999]" />
          <button type="button" className="h-[22px] w-[83px] border border-[#8c8c8c] bg-[#f4f4f4]">激活尺寸标注</button>
        </div>
        <div className="flex min-h-0 flex-1">
          <aside className="mr-0.5 flex w-[220px] shrink-0 flex-col gap-0.5 pt-0.5">
            <Properties />
            <ProjectBrowser />
          </aside>
          <Workspace />
        </div>
      </div>

      {/* callout pinned to the insulation button */}
      <div className="pointer-events-none absolute top-[7px] left-[198px] flex w-[125px] flex-col items-center text-black">
        <p className="mb-0.5 text-[16px] leading-6 whitespace-nowrap">点击“保温层选型”</p>
        <span className="flex h-7 w-7 items-center justify-center rounded-full bg-[#fb7a7a] text-[13px] font-bold text-white shadow-[1px_2px_3px_rgba(0,0,0,0.45)]">2</span>
        <span className="h-[82px] w-px bg-[#fb7a7a]" />
      </div>
    </div>
  );
}
